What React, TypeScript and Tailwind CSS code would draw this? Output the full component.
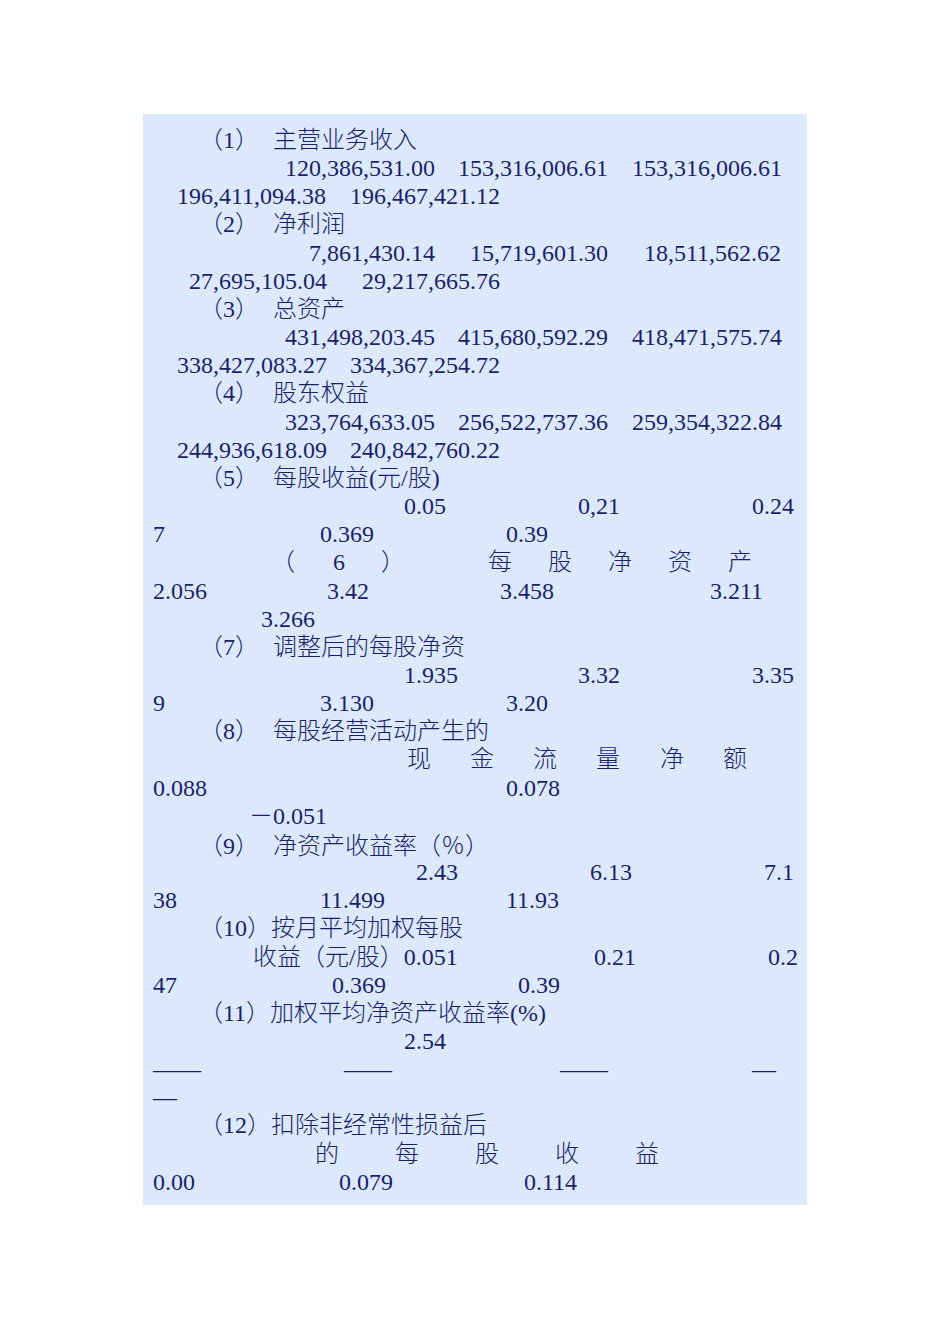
type Seg = { t: string; w?: string };
type Line = { pl: string; segs: Seg[] };

const head = (label: string, text: string): Line => ({
  pl: "pl-[46px]",
  segs: [{ t: label, w: "w-[74px]" }, { t: text }],
});

const lines: Line[] = [
  head("（1）", "主营业务收入"),
  {
    pl: "pl-[132px]",
    segs: [
      { t: "120,386,531.00", w: "w-[173px]" },
      { t: "153,316,006.61", w: "w-[174px]" },
      { t: "153,316,006.61" },
    ],
  },
  { pl: "pl-[24px]", segs: [{ t: "196,411,094.38", w: "w-[173px]" }, { t: "196,467,421.12" }] },
  head("（2）", "净利润"),
  {
    pl: "pl-[156px]",
    segs: [
      { t: "7,861,430.14", w: "w-[161px]" },
      { t: "15,719,601.30", w: "w-[174px]" },
      { t: "18,511,562.62" },
    ],
  },
  { pl: "pl-[36px]", segs: [{ t: "27,695,105.04", w: "w-[173px]" }, { t: "29,217,665.76" }] },
  head("（3）", "总资产"),
  {
    pl: "pl-[132px]",
    segs: [
      { t: "431,498,203.45", w: "w-[173px]" },
      { t: "415,680,592.29", w: "w-[174px]" },
      { t: "418,471,575.74" },
    ],
  },
  { pl: "pl-[24px]", segs: [{ t: "338,427,083.27", w: "w-[173px]" }, { t: "334,367,254.72" }] },
  head("（4）", "股东权益"),
  {
    pl: "pl-[132px]",
    segs: [
      { t: "323,764,633.05", w: "w-[173px]" },
      { t: "256,522,737.36", w: "w-[174px]" },
      { t: "259,354,322.84" },
    ],
  },
  { pl: "pl-[24px]", segs: [{ t: "244,936,618.09", w: "w-[173px]" }, { t: "240,842,760.22" }] },
  head("（5）", "每股收益(元/股)"),
  {
    pl: "pl-[251px]",
    segs: [{ t: "0.05", w: "w-[174px]" }, { t: "0,21", w: "w-[174px]" }, { t: "0.24" }],
  },
  { pl: "pl-0", segs: [{ t: "7", w: "w-[167px]" }, { t: "0.369", w: "w-[186px]" }, { t: "0.39" }] },
  {
    pl: "pl-[118px]",
    segs: [
      { t: "（", w: "w-[62px]" },
      { t: "6", w: "w-[48px]" },
      { t: "）", w: "w-[107px]" },
      { t: "每", w: "w-[60px]" },
      { t: "股", w: "w-[60px]" },
      { t: "净", w: "w-[60px]" },
      { t: "资", w: "w-[60px]" },
      { t: "产" },
    ],
  },
  {
    pl: "pl-0",
    segs: [
      { t: "2.056", w: "w-[174px]" },
      { t: "3.42", w: "w-[173px]" },
      { t: "3.458", w: "w-[210px]" },
      { t: "3.211" },
    ],
  },
  { pl: "pl-[108px]", segs: [{ t: "3.266" }] },
  head("（7）", "调整后的每股净资"),
  {
    pl: "pl-[251px]",
    segs: [{ t: "1.935", w: "w-[174px]" }, { t: "3.32", w: "w-[174px]" }, { t: "3.35" }],
  },
  { pl: "pl-0", segs: [{ t: "9", w: "w-[167px]" }, { t: "3.130", w: "w-[186px]" }, { t: "3.20" }] },
  head("（8）", "每股经营活动产生的"),
  {
    pl: "pl-[254px]",
    segs: [
      { t: "现", w: "w-[63px]" },
      { t: "金", w: "w-[63px]" },
      { t: "流", w: "w-[63px]" },
      { t: "量", w: "w-[64px]" },
      { t: "净", w: "w-[63px]" },
      { t: "额" },
    ],
  },
  { pl: "pl-0", segs: [{ t: "0.088", w: "w-[353px]" }, { t: "0.078" }] },
  { pl: "pl-[96px]", segs: [{ t: "－0.051" }] },
  {
    pl: "pl-[46px]",
    segs: [{ t: "（9）", w: "w-[74px]" }, { t: "净资产收益率（" }, { t: "％", w: "w-[24px] font-['Noto_Sans_CJK_SC']" }, { t: "）" }],
  },
  {
    pl: "pl-[263px]",
    segs: [{ t: "2.43", w: "w-[174px]" }, { t: "6.13", w: "w-[174px]" }, { t: "7.1" }],
  },
  { pl: "pl-0", segs: [{ t: "38", w: "w-[167px]" }, { t: "11.499", w: "w-[186px]" }, { t: "11.93" }] },
  { pl: "pl-[46px]", segs: [{ t: "（10）按月平均加权每股" }] },
  {
    pl: "pl-[100px]",
    segs: [{ t: "收益（元/股）0.051", w: "w-[341px]" }, { t: "0.21", w: "w-[174px]" }, { t: "0.2" }],
  },
  { pl: "pl-0", segs: [{ t: "47", w: "w-[179px]" }, { t: "0.369", w: "w-[186px]" }, { t: "0.39" }] },
  { pl: "pl-[46px]", segs: [{ t: "（11）加权平均净资产收益率(%)" }] },
  { pl: "pl-[251px]", segs: [{ t: "2.54" }] },
  {
    pl: "pl-0",
    segs: [
      { t: "——", w: "w-[191px]" },
      { t: "——", w: "w-[216px]" },
      { t: "——", w: "w-[192px]" },
      { t: "—" },
    ],
  },
  { pl: "pl-0", segs: [{ t: "—" }] },
  { pl: "pl-[46px]", segs: [{ t: "（12）扣除非经常性损益后" }] },
  {
    pl: "pl-[162px]",
    segs: [
      { t: "的", w: "w-[80px]" },
      { t: "每", w: "w-[80px]" },
      { t: "股", w: "w-[80px]" },
      { t: "收", w: "w-[80px]" },
      { t: "益" },
    ],
  },
  { pl: "pl-0", segs: [{ t: "0.00", w: "w-[186px]" }, { t: "0.079", w: "w-[185px]" }, { t: "0.114" }] },
];

export default function App() {
  return (
    <div className="min-h-[1344px] w-[950px] bg-white pt-[114px] pl-[143px]">
      <div className="w-[664px] bg-[#dce9fc] pt-[12px] pb-[9px] pl-[10px] font-['Liberation_Serif','Noto_Sans_CJK_SC',serif] text-[24px] font-light leading-[28.16px] text-[#1a1f6e]">
        {lines.map((line, i) => (
          <div key={i} className={`flex h-[28.16px] items-baseline whitespace-pre ${line.pl}`}>
            {line.segs.map((s, j) => (
              <span key={j} className={`inline-block shrink-0 ${s.w ?? ""}`}>
                {s.t}
              </span>
            ))}
          </div>
        ))}
      </div>
    </div>
  );
}
